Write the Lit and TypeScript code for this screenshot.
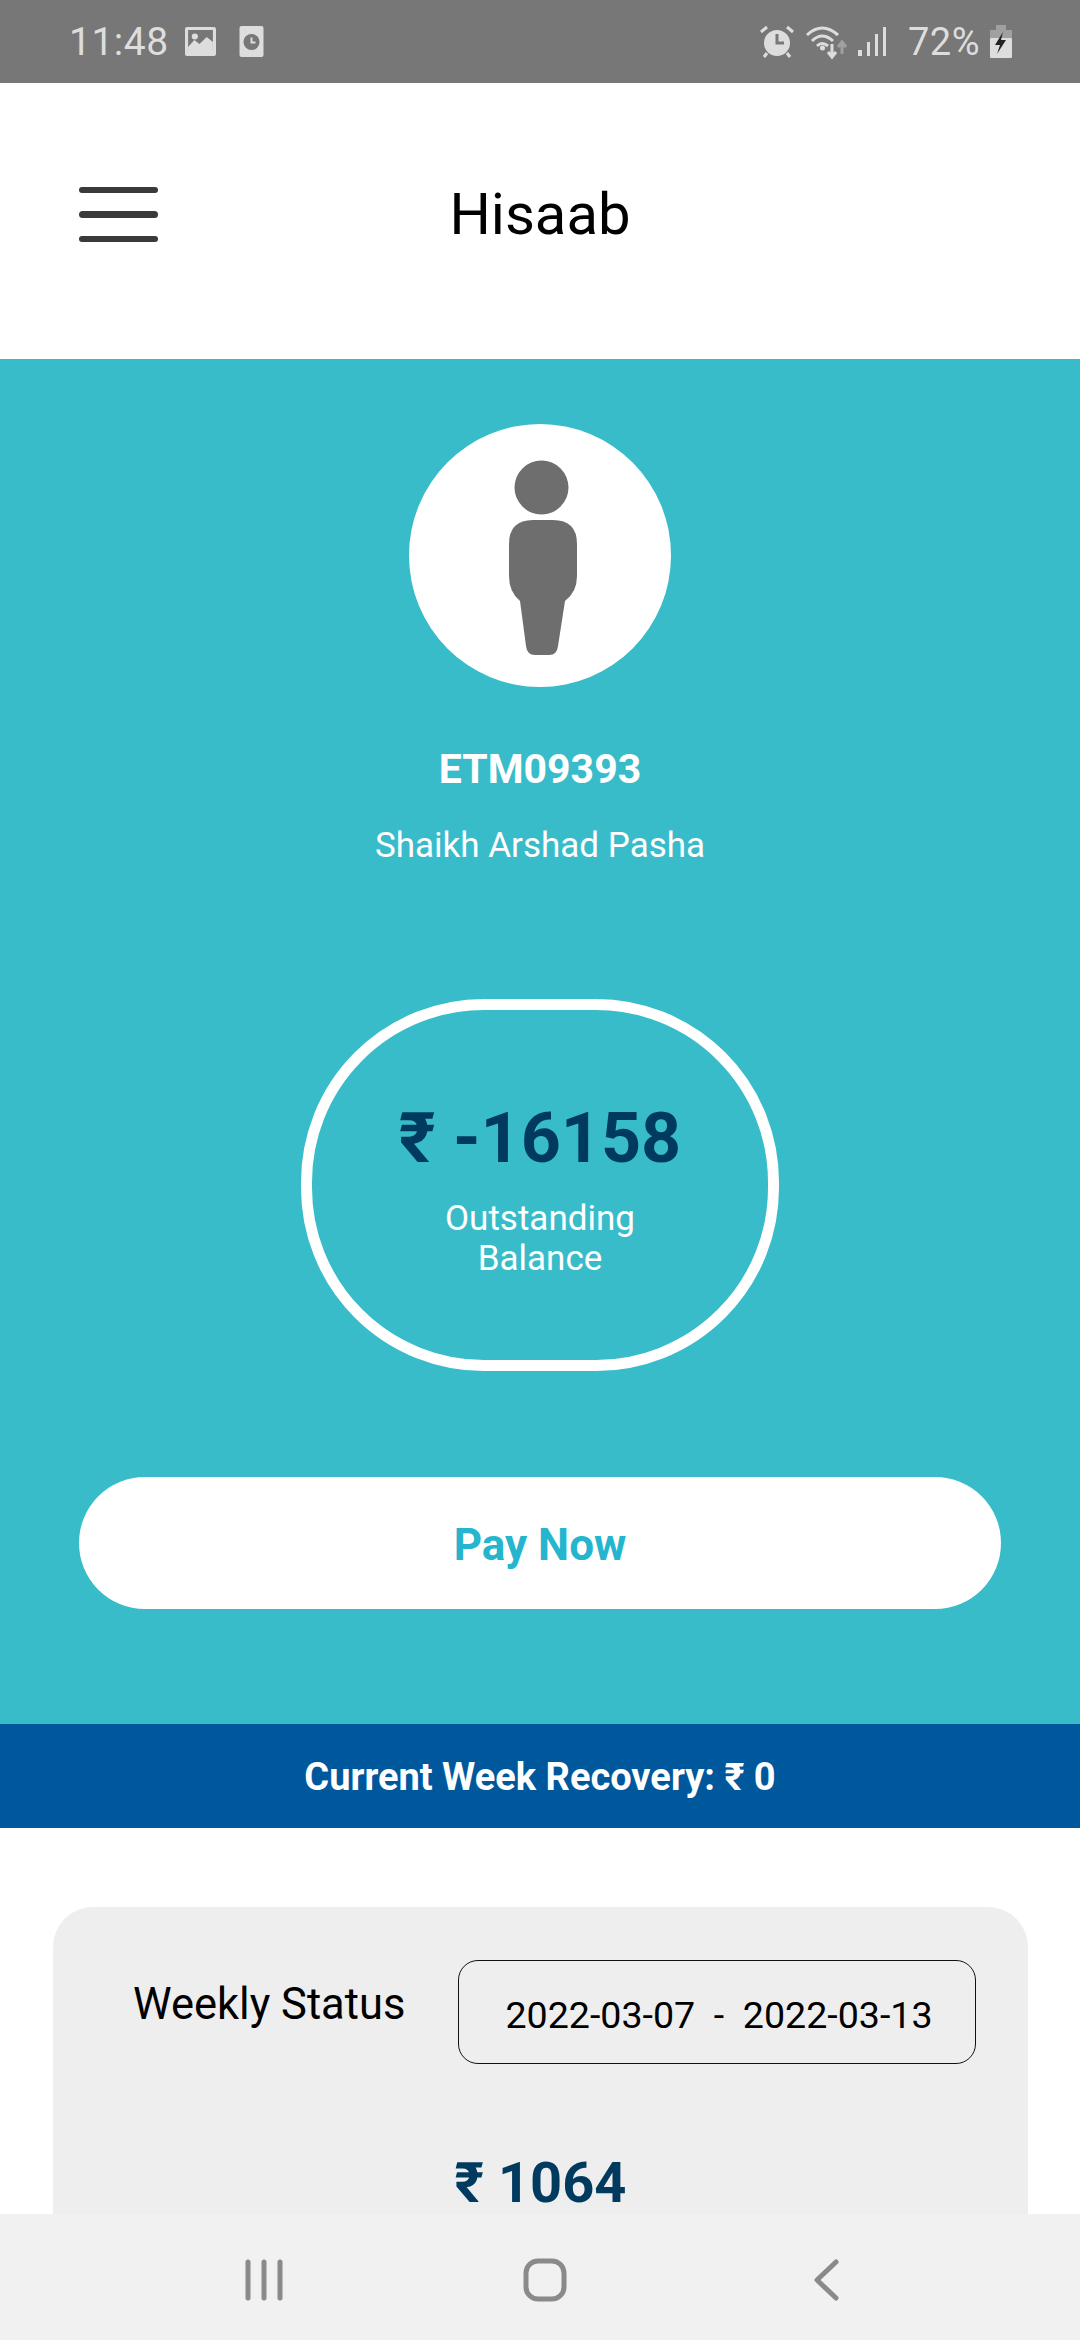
import { LitElement, html, css } from 'lit';
import { customElement } from 'lit/decorators.js';

@customElement('app-root')
export class AppRoot extends LitElement {
  static styles = css`
    :host {
      display: flex;
      flex-direction: column;
      width: 1080px;
      height: 2340px;
      overflow: hidden;
      background: #fff;
      font-family: Roboto, 'Noto Sans', sans-serif;
    }
    .status {
      flex: none;
      height: 83px;
      background: #777;
      color: #ddd;
      display: flex;
      align-items: center;
      padding: 0 68px 0 69px;
      box-sizing: border-box;
    }
    .status svg { display: block; flex: none; }
    .time { font-size: 39px; width: 116px; letter-spacing: 0.5px; }
    .pct { font-size: 38px; margin: 0 10px 0 21px; letter-spacing: 0.5px; }
    .spacer { flex: 1; }
    .header {
      flex: none;
      height: 276px;
      display: flex;
      align-items: center;
      justify-content: center;
      position: relative;
    }
    .menu {
      position: absolute;
      left: 79px;
      top: 104px;
      display: flex;
      flex-direction: column;
      gap: 18px;
      width: 79px;
    }
    .menu span { height: 6.4px; border-radius: 4px; background: #3a3a3a; }
    .title { font-size: 58px; color: #000; margin-top: -14px; }
    .hero {
      flex: none;
      height: 1365px;
      box-sizing: border-box;
      background: #38bcca;
      color: #fff;
      display: flex;
      flex-direction: column;
      align-items: center;
      padding-top: 65px;
    }
    .avatar {
      width: 262px;
      height: 263px;
      border-radius: 50%;
      background: #fff;
    }
    .avatar svg { display: block; }
    .code { font-size: 41px; font-weight: 700; margin-top: 58px; line-height: 48px; }
    .name { font-size: 35px; margin-top: 31px; line-height: 44px; }
    .pill {
      width: 478px;
      height: 372px;
      box-sizing: border-box;
      border: 11px solid #fff;
      border-radius: 183px;
      margin-top: 131px;
      display: flex;
      flex-direction: column;
      align-items: center;
      padding-top: 86px;
    }
    .amount { font-size: 70px; font-weight: 700; color: #003a5f; line-height: 84px; }
    .label { font-size: 35px; line-height: 40px; text-align: center; margin-top: 19px; }
    .pay {
      width: 922px;
      height: 132px;
      box-sizing: border-box;
      padding-top: 3px;
      border-radius: 66px;
      background: #fff;
      color: #26b5ce;
      font-size: 44px;
      font-weight: 700;
      display: flex;
      align-items: center;
      justify-content: center;
      margin-top: 106px;
    }
    .band {
      flex: none;
      height: 104px;
      background: #00589c;
      color: #fff;
      font-size: 38px;
      font-weight: 700;
      display: flex;
      align-items: center;
      justify-content: center;
      padding-top: 2px;
      box-sizing: border-box;
    }
    .body {
      flex: 1;
      min-height: 0;
      overflow: hidden;
      padding: 79px 52px 0 53px;
    }
    .card {
      background: #eeeeef;
      border-radius: 40px 40px 0 0;
      height: 400px;
      padding-top: 53px;
      display: flex;
      flex-direction: column;
      align-items: center;
    }
    .row { display: flex; align-self: stretch; padding-left: 80px; }
    .row-label { font-size: 43.5px; color: #000; width: 325px; line-height: 90px; }
    .range {
      width: 518px;
      height: 104px;
      box-sizing: border-box;
      border: 1.5px solid #111;
      border-radius: 20px;
      font-size: 37.6px;
      color: #000;
      display: flex;
      align-items: center;
      justify-content: center;
      white-space: pre;
      padding: 6px 0 0 4px;
    }
    .weekly { font-size: 56px; font-weight: 700; color: #003a5f; margin-top: 91px; line-height: 56px; }
    .nav {
      flex: none;
      height: 126px;
      box-sizing: border-box;
      padding: 6px 0 0 10px;
      background: #f1f1f1;
      display: grid;
      grid-template-columns: repeat(3, 281px);
      justify-content: center;
      justify-items: center;
      align-items: center;
    }
    .nav svg { display: block; fill: none; stroke: #8a8a8a; stroke-linecap: round; stroke-linejoin: round; }
  `;

  render() {
    return html`
      <div class="status">
        <span class="time">11:48</span>
        <svg width="31" height="30" viewBox="0 0 30 30" preserveAspectRatio="none">
          <rect width="30" height="29" rx="2" fill="#ddd" />
          <rect x="3" y="3" width="24" height="20" fill="#777" />
          <circle cx="9.5" cy="9.5" r="3" fill="#ddd" />
          <path d="M3 20 L9 13 L14 17 L21 10 L27 15 V29 H3 Z" fill="#ddd" />
        </svg>
        <svg width="25" height="31" viewBox="0 0 24 31" style="margin-left:23px">
          <rect width="24" height="31" rx="2" fill="#ddd" />
          <circle cx="12" cy="16" r="8" fill="#777" />
          <path d="M12 11.5 V16.5 H16" fill="none" stroke="#ddd" stroke-width="2" />
        </svg>
        <div class="spacer"></div>
        <svg width="36" height="33" viewBox="0 0 36 33">
          <circle cx="18" cy="18" r="13" fill="#ddd" />
          <path d="M18 9 V18 H25" fill="none" stroke="#777" stroke-width="3" />
          <path d="M2 7 L8 2 M34 7 L28 2 M8 28 L5 32 M28 28 L31 32" stroke="#ddd" stroke-width="3" />
        </svg>
        <svg width="44" height="36" viewBox="0 0 44 36" style="margin-left:10px">
          <path d="M2 11 Q17 -3 33 11 M7 17 Q17 7 28 17 M12 22 Q17 17 23 22" fill="none" stroke="#ddd" stroke-width="3" />
          <circle cx="17.5" cy="24" r="2.5" fill="#ddd" />
          <path d="M27 20 V32 M23 28 L27 33 L31 28" fill="none" stroke="#ddd" stroke-width="3" />
          <path d="M37 30 V19 M33 23 L37 18 L41 23" fill="none" stroke="#a0a0a0" stroke-width="3" />
        </svg>
        <svg width="30" height="31" viewBox="0 0 30 31" style="margin-left:8px">
          <rect x="1" y="24" width="4" height="6" fill="#ddd" />
          <rect x="10" y="16" width="3" height="14" fill="#ddd" />
          <rect x="18" y="8" width="3" height="22" fill="#ddd" />
          <rect x="26" y="1" width="3" height="29" fill="#ddd" />
        </svg>
        <span class="pct">72%</span>
        <svg width="22" height="33" viewBox="0 0 22 33">
          <rect x="6" y="0" width="10" height="6" fill="#a0a0a0" />
          <rect x="0" y="5" width="22" height="8" fill="#a0a0a0" />
          <rect x="0" y="13" width="22" height="20" rx="1" fill="#ddd" />
          <path d="M13 7 L5 20 H10 L7 29 L16 15 H11 Z" fill="#222" />
        </svg>
      </div>

      <div class="header">
        <div class="menu"><span></span><span></span><span></span></div>
        <div class="title">Hisaab</div>
      </div>

      <div class="hero">
        <div class="avatar">
          <svg width="262" height="263" viewBox="0 0 262 263">
            <circle cx="132.5" cy="63.5" r="27" fill="#6e6e6e" />
            <path
              d="M100 120 Q100 96 124 96 H144 Q168 96 168 120 V152 Q168 168 156 177 L149 222 Q148 231 140 231 H126 Q118 231 117 222 L111 177 Q100 168 100 152 Z"
              fill="#6e6e6e"
            />
          </svg>
        </div>
        <div class="code">ETM09393</div>
        <div class="name">Shaikh Arshad Pasha</div>
        <div class="pill">
          <div class="amount">₹ -16158</div>
          <div class="label">Outstanding<br />Balance</div>
        </div>
        <div class="pay">Pay Now</div>
      </div>

      <div class="band">Current Week Recovery: ₹ 0</div>

      <div class="body">
        <div class="card">
          <div class="row">
            <div class="row-label">Weekly Status</div>
            <div class="range">2022-03-07  -  2022-03-13</div>
          </div>
          <div class="weekly">₹ 1064</div>
        </div>
      </div>

      <div class="nav">
        <svg width="38" height="42" viewBox="0 0 38 42" stroke-width="5">
          <path d="M3 3 V39 M19 3 V39 M35 3 V39" />
        </svg>
        <svg width="44" height="44" viewBox="0 0 44 44" stroke-width="5">
          <rect x="3" y="3" width="38" height="38" rx="12" />
        </svg>
        <svg width="28" height="42" viewBox="0 0 28 42" stroke-width="5">
          <path d="M24 3 L5 21 L24 39" />
        </svg>
      </div>
    `;
  }
}

declare global {
  interface HTMLElementTagNameMap {
    'app-root': AppRoot;
  }
}
